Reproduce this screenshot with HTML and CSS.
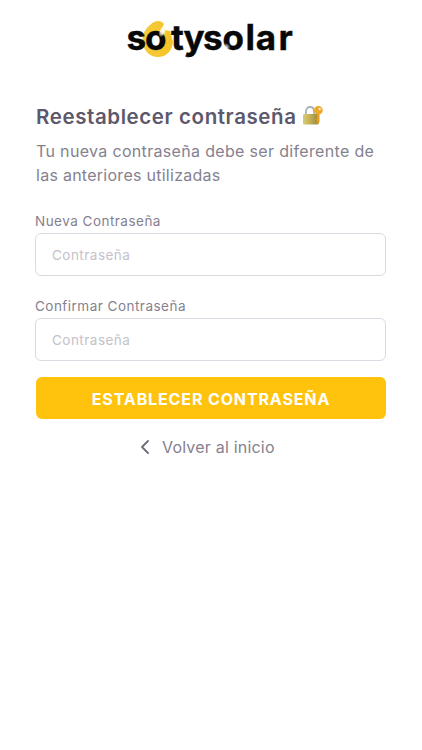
FILE: index.html
```
<!DOCTYPE html>
<html lang="es">

<head>
    <meta charset="UTF-8">
    <meta name="viewport" content="width=device-width, initial-scale=1.0">
    <title>Reestablecer contraseña - Sotysolar</title>
    <link rel="stylesheet" href="styles.css">
</head>

<body>
    <header class="header">
        <svg class="logo" viewBox="0 0 168 42" role="img" aria-label="sotysolar">
            <defs>
                <linearGradient id="sun" x1="0" y1="0" x2="1" y2="0">
                    <stop offset="0" stop-color="#f3cb3c" />
                    <stop offset="1" stop-color="#f6c324" />
                </linearGradient>
                <radialGradient id="glow">
                    <stop offset="0" stop-color="#fff" />
                    <stop offset="0.5" stop-color="#fff8e4" stop-opacity="0.8" />
                    <stop offset="1" stop-color="#fff3cf" stop-opacity="0" />
                </radialGradient>
                <radialGradient id="shine">
                    <stop offset="0" stop-color="#fff" />
                    <stop offset="1" stop-color="#fff" stop-opacity="0" />
                </radialGradient>
            </defs>
            <path class="logo-sun" d="M37 4 C34 0 28 0 23 5 C18 9 15.5 14 15.5 20 C15.5 30 22 37 31 37 C39 37 45 31 46 22 L43 11 L38 10 L33 12 Z" />
            <circle cx="29" cy="20.5" r="7" fill="#fff" />
            <text class="logo-text" y="30" x="-0.5 18 44 56.5 76 95.5 118.5 128.7 151.5">sotysolar</text>
            <ellipse cx="35.5" cy="11.5" rx="3.6" ry="6" transform="rotate(25 35.5 11.5)" fill="url(#glow)" />
            <circle cx="99" cy="27.5" r="4.5" fill="url(#shine)" />
        </svg>
    </header>

    <main class="container">
        <h1>
            <span class="title-text">Reestablecer contraseña</span>
            <svg class="lock" viewBox="0 0 21 21" aria-hidden="true">
                <defs>
                    <linearGradient id="brass" x1="0" y1="0" x2="1" y2="0">
                        <stop offset="0" stop-color="#d8cc78" />
                        <stop offset="0.4" stop-color="#c6b458" />
                        <stop offset="1" stop-color="#98893a" />
                    </linearGradient>
                </defs>
                <path d="M4 10 V6.5 C4 0.5 12 0.5 12 6.5 V10" fill="none" stroke="#a9b3bb" stroke-width="1.8" />
                <rect x="1" y="9" width="15.5" height="10.5" rx="1.2" fill="url(#brass)" />
                <path d="M15 8 H17.5 V17 L16.2 19 L14.8 17.5 V15.5 L14 14.5 L15 13.5 Z" fill="#e99b1c" />
                <circle cx="16.4" cy="5.2" r="4.3" fill="#f1a720" />
                <circle cx="17.6" cy="4" r="1.2" fill="#fff4d8" />
            </svg>
        </h1>
        <p class="subtitle">
            <span class="line-one">Tu nueva contraseña debe ser diferente de</span>
            <span class="line-two">las anteriores utilizadas</span>
        </p>

        <form class="form">
            <div class="field">
                <label for="password">Nueva Contraseña</label>
                <input type="password" id="password" placeholder="Contraseña">
            </div>
            <div class="field">
                <label for="confirm">Confirmar Contraseña</label>
                <input type="password" id="confirm" placeholder="Contraseña">
            </div>
            <button type="submit">ESTABLECER CONTRASEÑA</button>
        </form>

        <a class="back" href="#">
            <svg class="chevron" viewBox="0 0 10 16" aria-hidden="true">
                <path d="M8 2 L2 8 L8 14" />
            </svg>
            <span>Volver al inicio</span>
        </a>
    </main>
</body>

</html>
```
FILE: styles.css
```
* {
    margin: 0;
    padding: 0;
    box-sizing: border-box;
    font-family: Inter, "Open Sans", sans-serif;
}

body {
    background-color: #fff;
    color: #85818f;
}

.header {
    display: flex;
    justify-content: center;
    padding-top: 20px;
}

.logo {
    width: 168px;
    height: 42px;
    overflow: visible;
}

.logo-text {
    font-size: 35px;
    font-weight: 700;
    fill: #080808;
    stroke: #080808;
    stroke-width: 0.4px;
}

.logo-sun {
    fill: url(#sun);
}

.container {
    display: flex;
    flex-direction: column;
    padding: 40px 36px 0;
}

h1 {
    display: flex;
    align-items: center;
    gap: 5px;
    height: 30px;
    color: #5d586c;
    font-size: 20.5px;
    font-weight: 600;
    line-height: 30px;
    white-space: nowrap;
}

.title-text {
    letter-spacing: 0.59px;
}

.lock {
    width: 21px;
    height: 21px;
    margin-top: -4px;
}

.subtitle {
    margin-top: 7px;
    font-size: 16px;
    line-height: 24px;
    white-space: nowrap;
}

.subtitle span {
    display: block;
}

.line-one {
    letter-spacing: 0.33px;
}

.line-two {
    letter-spacing: 0.27px;
}

.form {
    display: flex;
    flex-direction: column;
    margin-top: 23px;
}

.field {
    display: flex;
    flex-direction: column;
    margin: 0 0 19px -1px;
}

label {
    height: 23px;
    font-size: 13.5px;
    line-height: 22px;
    letter-spacing: 0.48px;
}

input {
    height: 43px;
    padding: 1px 16px 0;
    border: 1px solid #dbdae2;
    border-radius: 6px;
    font-size: 13.5px;
    letter-spacing: 0.48px;
    outline: none;
}

input::placeholder {
    color: #c4c2ca;
}

button {
    height: 42px;
    margin-top: -3px;
    padding-top: 1px;
    border: none;
    border-radius: 6px;
    background: #ffc30d;
    color: #fff;
    font-size: 16px;
    font-weight: 700;
    letter-spacing: 0.87px;
    cursor: pointer;
}

.back {
    display: flex;
    align-items: center;
    gap: 12px;
    margin: 16px 0 0 104px;
    color: #85818f;
    font-size: 16px;
    line-height: 24px;
    letter-spacing: 0.2px;
    text-decoration: none;
}

.chevron {
    width: 10px;
    height: 16px;
    fill: none;
    stroke: #6f6b7d;
    stroke-width: 1.8;
    stroke-linecap: round;
    stroke-linejoin: round;
}
```
